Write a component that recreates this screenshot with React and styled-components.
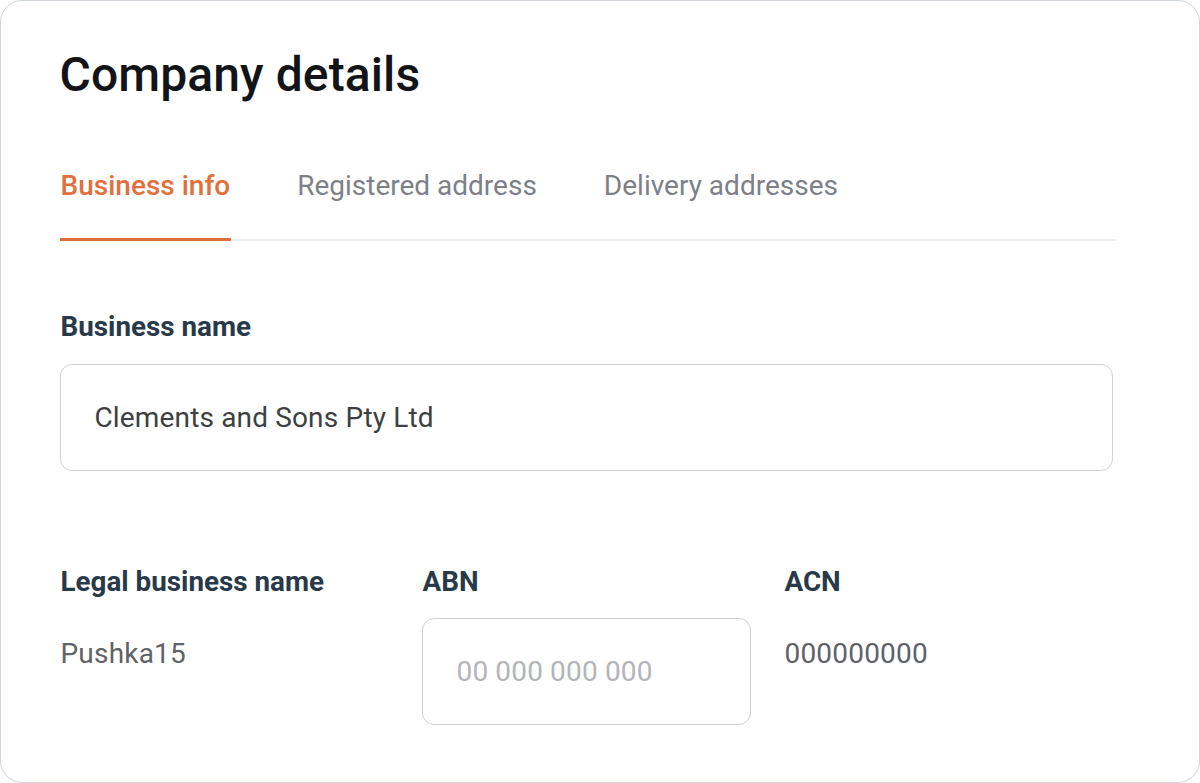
import React from 'react'
import styled, { createGlobalStyle } from 'styled-components'

const Global = createGlobalStyle`
  html, body {
    margin: 0;
    padding: 0;
    background: #ffffff;
  }
  * { box-sizing: border-box; }
`

const Card = styled.div`
  width: 1200px;
  height: 783px;
  border: 1.5px solid #cfd5d9;
  border-radius: 22px;
  background: #fff;
  padding: 46px 85px 0 58.5px;
  font-family: Roboto, "Liberation Sans", sans-serif;
  overflow: hidden;
`

const Title = styled.h1`
  margin: 0;
  font-size: 48px;
  font-weight: 500;
  color: #121418;
  line-height: 56px;
  letter-spacing: 0.1px;
`

const Tabs = styled.div`
  display: flex;
  gap: 65px;
  margin-top: 66px;
  border-bottom: 2px solid #eceef0;
  width: 1056px;
`

const Tab = styled.div`
  font-size: 28px;
  line-height: 33px;
  font-weight: ${p => (p.active ? 500 : 400)};
  color: ${p => (p.active ? '#e2703c' : '#7d8087')};
  padding: 0 1px 36px 1px;
  border-bottom: 3px solid ${p => (p.active ? '#dd6f3e' : 'transparent')};
  margin-bottom: -2px;
`

const Label = styled.div`
  font-size: 27.8px;
  font-weight: 700;
  color: #28394a;
  line-height: 32px;
  margin-left: 1px;
`

const Section = styled.div`
  margin-top: 70px;
`

const Field = styled.div`
  height: 107px;
  border: 1.5px solid #cdd2d6;
  border-radius: 12px;
  display: flex;
  align-items: center;
  padding-left: 34px;
  font-size: 28px;
  letter-spacing: 0.15px;
  color: ${p => (p.$placeholder ? '#b3b5b8' : '#3d3f42')};
  width: ${p => p.$w || 1053}px;
  margin-top: ${p => p.$top || 0}px;
`

const Row = styled.div`
  display: grid;
  grid-template-columns: 362px 362px 1fr;
  margin-top: 95px;
`

const Col = styled.div`
  display: flex;
  flex-direction: column;
`

const Value = styled.div`
  font-size: 28px;
  line-height: 33px;
  letter-spacing: 0.2px;
  color: #5f6266;
  margin-top: 39px;
  margin-left: 1px;
`

export default function App() {
  return (
    <>
      <Global />
      <Card>
        <Title>Company details</Title>
        <Tabs>
          <Tab active>Business info</Tab>
          <Tab>Registered address</Tab>
          <Tab>Delivery addresses</Tab>
        </Tabs>
        <Section>
          <Label>Business name</Label>
          <Field $top={21}>Clements and Sons Pty Ltd</Field>
        </Section>
        <Row>
          <Col>
            <Label>Legal business name</Label>
            <Value>Pushka15</Value>
          </Col>
          <Col>
            <Label>ABN</Label>
            <Field $placeholder $w={329} $top={20}>00 000 000 000</Field>
          </Col>
          <Col>
            <Label>ACN</Label>
            <Value>000000000</Value>
          </Col>
        </Row>
      </Card>
    </>
  )
}
